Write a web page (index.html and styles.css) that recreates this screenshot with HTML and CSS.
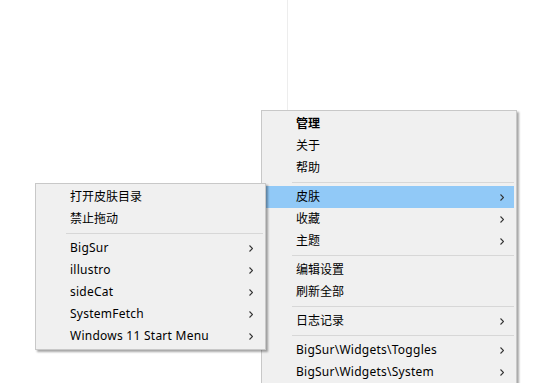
FILE: index.html
```html
<!DOCTYPE html>
<html lang="zh-CN">
<head>
  <meta charset="UTF-8" />
  <meta name="viewport" content="width=device-width, initial-scale=1" />
  <title>Rainmeter menu</title>
  <link rel="stylesheet" href="styles.css">
</head>
<body>

  <div class="guide"></div>

  <!-- main tray menu -->
  <ul class="menu main-menu">
    <li class="item bold">管理</li>
    <li class="item">关于</li>
    <li class="item">帮助</li>
    <li class="sep"></li>
    <li class="item sub active">皮肤</li>
    <li class="item sub">收藏</li>
    <li class="item sub">主题</li>
    <li class="sep"></li>
    <li class="item">编辑设置</li>
    <li class="item">刷新全部</li>
    <li class="sep"></li>
    <li class="item sub">日志记录</li>
    <li class="sep"></li>
    <li class="item sub"><span class="latin">BigSur\Widgets\Toggles</span></li>
    <li class="item sub"><span class="latin">BigSur\Widgets\System</span></li>
  </ul>

  <!-- skins submenu -->
  <ul class="menu skin-menu">
    <li class="item">打开皮肤目录</li>
    <li class="item">禁止拖动</li>
    <li class="sep"></li>
    <li class="item sub"><span class="latin">BigSur</span></li>
    <li class="item sub"><span class="latin">illustro</span></li>
    <li class="item sub"><span class="latin">sideCat</span></li>
    <li class="item sub"><span class="latin">SystemFetch</span></li>
    <li class="item sub"><span class="latin">Windows 11 Start Menu</span></li>
  </ul>

</body>
</html>
```

FILE: styles.css
```css
html, body { margin: 0; height: 100%; overflow: hidden; }
body {
  background: #fff; position: relative;
  font-family: "Noto Sans", "Noto Sans CJK SC", sans-serif; font-size: 12px; color: #000;
}

.guide { position: absolute; left: 287px; top: 0; width: 1px; height: 110px; background: #ededed; }

.menu {
  position: absolute; margin: 0; padding: 2px; list-style: none;
  background: #f0f0f0; border: 1px solid #c8c8c8;
  box-shadow: 2px 2px 2px rgba(0, 0, 0, 0.35);
}
.main-menu { left: 261px; top: 110px; width: 250px; }
.skin-menu { left: 35px; top: 183px; width: 225px; }

.item {
  height: 22px; line-height: 22px; padding: 0 10px 0 32px;
  display: flex; align-items: center; white-space: nowrap;
}
.item .latin { letter-spacing: 0.25px; }
.item.bold { font-weight: bold; }
.item.active { background: #91c9f7; }
.item.sub::after {
  content: ""; margin-left: auto; width: 4px; height: 7px;
  background: no-repeat center/4px 7px url("data:image/svg+xml,%3Csvg xmlns='http://www.w3.org/2000/svg' width='4' height='7' viewBox='0 0 4 7'%3E%3Cpath d='M0.5 0.5 L3.5 3.5 L0.5 6.5' fill='none' stroke='%23333' stroke-width='1.1'/%3E%3C/svg%3E");
}

.sep { height: 1px; margin: 3px 0 3px 28px; background: #d7d7d7; }
```
